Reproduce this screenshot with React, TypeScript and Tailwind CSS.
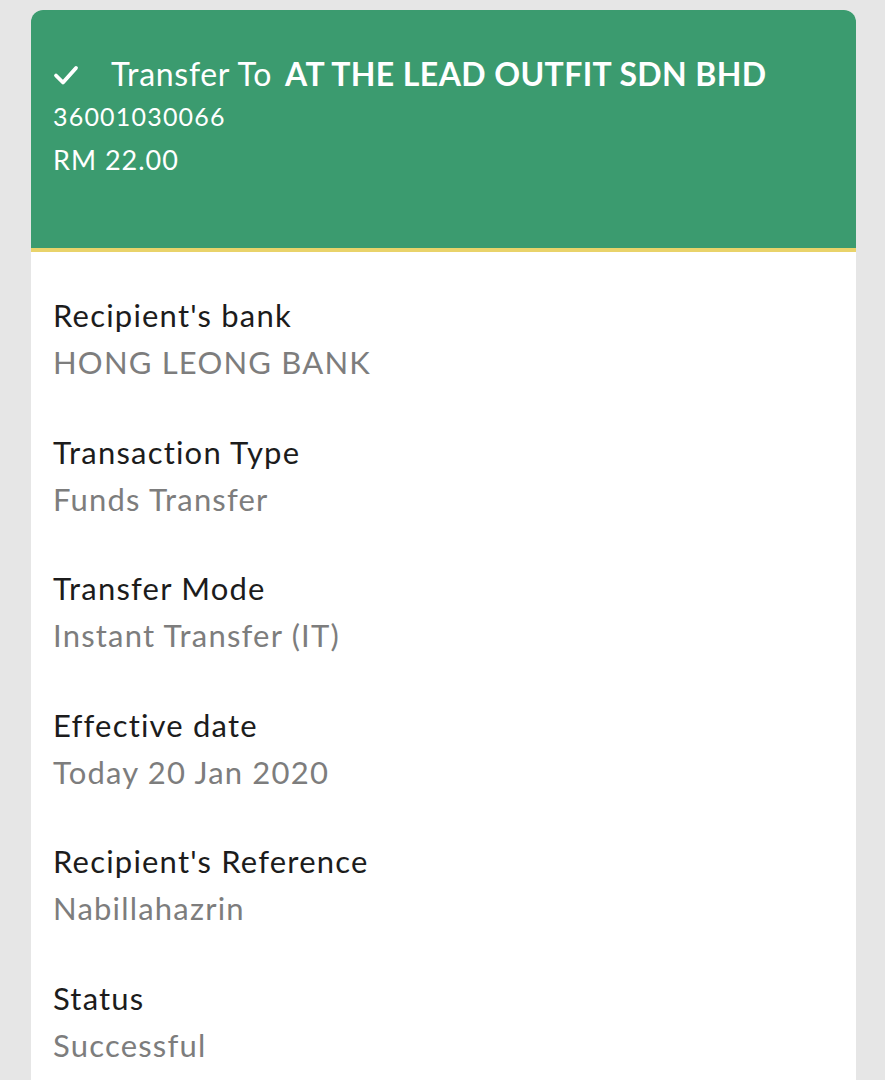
import React from "react";

const rows = [
  ["Recipient's bank", "HONG LEONG BANK"],
  ["Transaction Type", "Funds Transfer"],
  ["Transfer Mode", "Instant Transfer (IT)"],
  ["Effective date", "Today 20 Jan 2020"],
  ["Recipient's Reference", "Nabillahazrin"],
  ["Status", "Successful"],
];

export default function App() {
  return (
    <div
      className="w-[885px] h-[1080px] overflow-hidden bg-[#e6e6e6] pt-[10px] pl-[31px] pr-[29px]"
      style={{ fontFamily: "Lato, 'Noto Sans', sans-serif" }}
    >
      <div className="bg-white rounded-t-[12px] overflow-hidden h-[1100px]">
        <div className="bg-[#3b9b6f] h-[242px] border-b-[4px] border-[#e9d36a] pl-[22px] pt-[43px] text-white">
          <div className="flex items-center h-[42px]">
            <svg width="26" height="22" viewBox="0 0 26 22" className="mr-[32px] mt-[2px]">
              <path d="M3 11.5 L10 18.5 L23 4" fill="none" stroke="white" strokeWidth="3.8" strokeLinecap="round" strokeLinejoin="round" />
            </svg>
            <span className="text-[32px] leading-none tracking-[0.7px]">Transfer To</span>
            <span className="text-[32px] leading-none font-bold ml-[13px] tracking-[0.4px]">AT THE LEAD OUTFIT SDN BHD</span>
          </div>
          <div className="text-[25px] leading-[30px] mt-[6px] tracking-[1.2px]">36001030066</div>
          <div className="text-[27px] leading-[30px] mt-[14px] tracking-[1px]">RM 22.00</div>
        </div>
        <div className="pl-[22px] pt-[43px]">
          {rows.map(([label, value]) => (
            <div key={label} className="h-[136.5px]">
              <div className="text-[31px] leading-[40px] text-[#1c1c1c] tracking-[1.2px]">{label}</div>
              <div className="text-[31px] leading-[40px] mt-[7px] text-[#7d7d7d] tracking-[1.2px]">{value}</div>
            </div>
          ))}
        </div>
      </div>
    </div>
  );
}
